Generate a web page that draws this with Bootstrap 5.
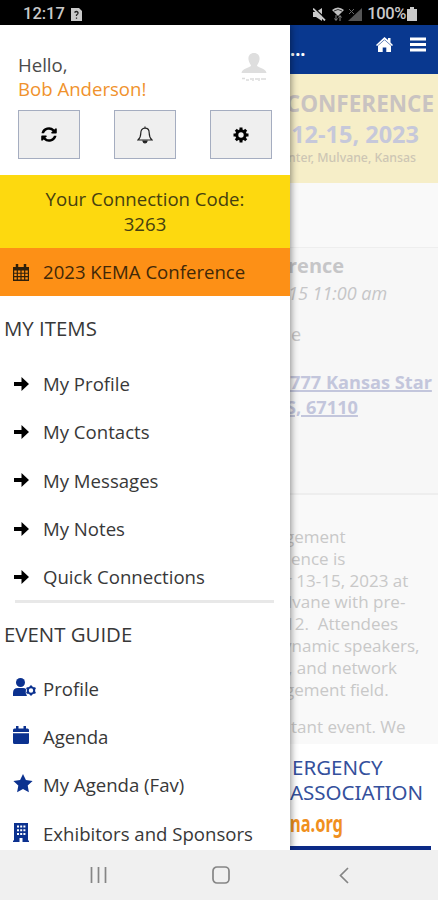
<!DOCTYPE html>
<html lang="en">
<head>
<meta charset="utf-8">
<meta name="viewport" content="width=device-width, initial-scale=1">
<title>2023 KEMA Conference</title>
<link href="https://cdn.jsdelivr.net/npm/bootstrap@5.3.0/dist/css/bootstrap.min.css" rel="stylesheet">
<style>
body{font-family:"Open Sans","Noto Sans",sans-serif;color:#383838;background:#fff}
.phone{width:438px;height:900px}
.status{height:25px;background:#000;color:#c9c9c9;font:500 16.5px/25px Roboto,sans-serif;padding:3px 21px 0 23px}
.status span{line-height:22px}
.sysnav{height:50px;background:#f0f0f0;padding-left:90px}
.drawer{width:290px;z-index:2;box-shadow:1px 0 7px rgba(0,0,0,.45)}
.drawer svg,.event svg,.status svg,.sysnav svg{display:block;flex:none}
.greet{height:150px;padding:28px 18px 0}
.greet p{font-size:18.6px;line-height:24px;color:#4a4a4a}
.greet .who{color:#f0922c}
.avatar{margin:0 5px 0 0}
.tool{width:62px;height:49px;background:#efefef;border:1.5px solid #a5adc0;border-radius:0;color:#000}
.code{height:73px;background:#fdd90f;font-size:18.6px;line-height:24.5px;padding-top:12px;color:#46400f}
.current{height:48px;background:#fd9016;font-size:18.6px;color:#412808;padding-left:13px}
.heading{height:64px;padding-left:4px;font-size:20.4px}
.entry{height:48.2px;font-size:18.6px;padding-left:13px}
.ico{width:30px;flex:none}
.rule{height:3px;background:#e8e8e8;margin:-1px 16px 0 15px}
.guide{height:63px;margin-bottom:-1px}
.blue{color:#0b318f}
.event{min-width:0}
.appbar{height:49px;background:#09388f;color:#fff}
.banner{height:109px;background:#f6eec8;font-weight:700;padding-top:16px}
.line{white-space:nowrap;display:block;flex:none}
.summary{height:248px;background:#f7f7f7;border-top:1px solid #eee;border-bottom:2px solid #eee;color:#c6c6c8}
.gapband{height:64px;background:#f9f9f9}
.about{height:249px;background:#f9f9f9;color:#c8c8c8;font-size:17px;line-height:21.8px;padding-top:31px}
.about .line{margin-left:-5px}
.addr{color:#c3c6dc;font-weight:700;font-size:18.2px;line-height:24.5px;text-decoration:underline;text-decoration-thickness:1.5px}
.logo{color:#34509c;font-family:"Noto Sans",sans-serif;background:#fff}
.orgname{font-size:20.5px;line-height:25px}
.site{font-size:22.5px;line-height:37px;color:#f0901e;transform:scaleX(.73);transform-origin:0 50%}
.logobar{height:4px;background:#0b2a86;margin-right:7px}
</style>
</head>
<body>
<div class="phone d-flex flex-column overflow-hidden">
  <div class="status d-flex align-items-center flex-shrink-0">
    <span>12:17</span>
    <svg style="margin-left:6px" width="11" height="13" viewBox="0 0 11 13"><path fill="#c9c9c9" d="M0 0h8l3 3v10H0z"/><path d="M3.500 4.500q2-2 3.500 0 .5 1.500-1.500 2.500v1M5.500 9.500v1.200" fill="none" stroke="#222" stroke-width="1.300"/></svg>
    <svg class="ms-auto" width="13" height="13" viewBox="0 0 13 13"><path fill="#c9c9c9" d="M0 4h3l6-4v13L3 9H0z"/><path d="M1 0l12 11" stroke="#000" stroke-width="1.300"/><path d="M0 .5l12 12" stroke="#c9c9c9" stroke-width="1.800"/></svg>
    <svg style="margin-left:6px" width="12" height="14" viewBox="0 0 12 14"><path d="M0 3q6-5 12 0L6 9z" fill="#c0c0c0"/><path d="M2 4q4-3 8 0" fill="none" stroke="#333"/><path d="M4 8v5M2.500 11.500L4 13.500l1.500-2M8 14V9M6.500 10.500L8 8.500l1.500 2" stroke="#888" fill="none"/></svg>
    <svg style="margin-left:4px" width="14" height="13" viewBox="0 0 14 13"><path fill="#555" d="M14 0v13H0z"/><path d="M1 1l5 5M6 1L1 6" stroke="#666"/></svg>
    <span style="margin-left:5px;letter-spacing:-.4px">100%</span>
    <svg style="margin-left:1px" width="10" height="14" viewBox="0 0 10 14"><path fill="#c9c9c9" d="M3 0h4v2h3v12H0V2h3z"/></svg>
  </div>

  <div class="d-flex flex-grow-1 overflow-hidden">
    <nav class="drawer bg-white position-relative flex-shrink-0">
      <div class="greet">
        <div class="d-flex justify-content-between">
          <div><p class="m-0">Hello,</p><p class="m-0 who">Bob Anderson!</p></div>
          <svg class="avatar" width="26" height="30" viewBox="0 0 26 30"><path fill="#dedede" d="M13 0c4 0 6 3 5.500 6.500C18 10 16.500 11 16 12.500c0 2 9 2.500 9.500 7.500H.5C1 15 10 14.500 10 12.500 9.500 11 8 10 7.500 6.500 7 3 9 0 13 0z"/><path d="M1 25.500h3M5 27h3M9 26h2M12 25v3M14 26h3M18 25v3M20 26h5" stroke="#dcdcdc" stroke-width="1.500"/></svg>
        </div>
        <div class="d-flex justify-content-between" style="margin-top:9px">
          <button class="tool btn p-0 d-flex align-items-center justify-content-center"><svg width="16" height="15" viewBox="0 0 512 512" preserveAspectRatio="none" fill="currentColor"><path d="M370 143A160 160 0 0 0 101 204c-1 5-6 9-12 9H31c-7 0-13-7-12-14A240 240 0 0 1 427 86l37-37c15-15 41-4 41 17v130c0 13-11 24-24 24H350c-21 0-32-26-17-41zM31 292h130c21 0 32 26 17 41l-37 37a160 160 0 0 0 270-62c1-5 6-9 12-9h58c7 0 13 7 12 14A240 240 0 0 1 85 426l-37 37c-15 15-41 4-41-17V316c0-13 11-24 24-24z"/></svg></button>
          <button class="tool btn p-0 d-flex align-items-center justify-content-center"><svg width="16" height="18" viewBox="0 0 16 18" fill="none" stroke="#222" stroke-width="1.200"><path d="M8 .5v2M8 2.200C5 2.200 3.800 4.500 3.800 7c0 4-1 5.500-2.800 7h14c-1.800-1.500-2.800-3-2.800-7 0-2.500-1.200-4.800-4.200-4.800z"/><path d="M6 15h4q-.5 2-2 2t-2-2z" fill="#222"/></svg></button>
          <button class="tool btn p-0 d-flex align-items-center justify-content-center"><svg width="16" height="16" viewBox="-8 -8 16 16"><circle r="4.200" fill="none" stroke="#000" stroke-width="3"/><path d="M0-7.500v15M-7.500 0h15M-5.200-5.200L5.200 5.200M-5.200 5.200L5.200-5.200" stroke="#000" stroke-width="3"/><circle r="2.700" fill="#efefef"/></svg></button>
        </div>
      </div>
      <div class="code text-center">Your Connection Code:<br>3263</div>
      <div class="current d-flex align-items-center"><span class="ico"><svg width="16" height="17" viewBox="0 0 16 17"><path fill="#30200a" d="M0 3h16v14H0z"/><path d="M4 0v4M12 0v4" stroke="#30200a" stroke-width="2.500"/><path fill="#fd9016" d="M1.200 6.500h2.500v2.200H1.200zM4.900 6.500h2.500v2.200H4.900zM8.600 6.500h2.500v2.200H8.600zM12.300 6.500h2.500v2.200h-2.500zM1.200 9.800h2.500V12H1.200zM4.900 9.800h2.500V12H4.900zM8.600 9.800h2.500V12H8.600zM12.300 9.800h2.500V12h-2.500zM1.200 13.200h2.500v2.400H1.200zM4.900 13.200h2.500v2.400H4.900zM8.600 13.200h2.500v2.400H8.600zM12.300 13.200h2.500v2.400h-2.500z"/></svg></span>2023 KEMA Conference</div>
      <div class="heading d-flex align-items-center">MY ITEMS</div>
      <div class="entry d-flex align-items-center"><span class="ico"><svg width="17" height="14" viewBox="0 0 17 14" fill="#000"><path d="M1 5h7.500V0L16 7l-7.500 7V9H1z"/></svg></span>My Profile</div>
      <div class="entry d-flex align-items-center"><span class="ico"><svg width="17" height="14" viewBox="0 0 17 14" fill="#000"><path d="M1 5h7.500V0L16 7l-7.500 7V9H1z"/></svg></span>My Contacts</div>
      <div class="entry d-flex align-items-center"><span class="ico"><svg width="17" height="14" viewBox="0 0 17 14" fill="#000"><path d="M1 5h7.500V0L16 7l-7.500 7V9H1z"/></svg></span>My Messages</div>
      <div class="entry d-flex align-items-center"><span class="ico"><svg width="17" height="14" viewBox="0 0 17 14" fill="#000"><path d="M1 5h7.500V0L16 7l-7.500 7V9H1z"/></svg></span>My Notes</div>
      <div class="entry d-flex align-items-center"><span class="ico"><svg width="17" height="14" viewBox="0 0 17 14" fill="#000"><path d="M1 5h7.500V0L16 7l-7.500 7V9H1z"/></svg></span>Quick Connections</div>
      <div class="rule"></div>
      <div class="heading guide d-flex align-items-center">EVENT GUIDE</div>
      <div class="entry d-flex align-items-center"><span class="ico blue"><svg width="23" height="22" viewBox="0 0 23 22" fill="currentColor"><circle cx="7.500" cy="4.500" r="4.500"/><path d="M0 18v-3q0-5 5-5h5q2 0 3 1-1 4 1 7z"/><circle cx="18" cy="12.500" r="3.200" fill="none" stroke="currentColor" stroke-width="2"/><path d="M18 7.500v2M18 15.500v2M13.500 10l2 1M20.500 14l2 1M13.500 15l2-1M20.500 11l2-1" stroke="currentColor" stroke-width="2"/></svg></span>Profile</div>
      <div class="entry d-flex align-items-center"><span class="ico blue"><svg width="16" height="22" viewBox="0 0 16 22" fill="currentColor"><path d="M0 6V4q0-1.500 1.500-1.500H3V0h2.500v2.500h5V0H13v2.500h1.500Q16 2.500 16 4v2zM0 7.200h16v9.300q0 1.500-1.500 1.500h-13Q0 18 0 16.500z"/></svg></span>Agenda</div>
      <div class="entry d-flex align-items-center"><span class="ico blue"><svg width="20" height="22" viewBox="0 0 20 22" fill="currentColor"><path d="M10 0l2.900 6.100 6.700.9-4.900 4.600 1.200 6.700L10 15.100l-5.900 3.200 1.200-6.700L.4 7l6.700-.9z"/></svg></span>My Agenda (Fav)</div>
      <div class="entry d-flex align-items-center"><span class="ico blue"><svg width="16" height="22" viewBox="0 0 16 22"><path fill="currentColor" d="M1 0h14v17.500h1V19H9.500v-4h-3v4H0v-1.500h1z"/><path fill="#fff" d="M4 2.500h2v2H4zM7.200 2.500h2v2h-2zM10.400 2.500h2v2h-2zM4 6.200h2v2H4zM7.200 6.200h2v2h-2zM10.400 6.200h2v2h-2zM4 10h2v2H4zM7.200 10h2v2h-2zM10.400 10h2v2h-2z"/></svg></span>Exhibitors and Sponsors</div>
    </nav>

    <main class="event flex-grow-1 d-flex flex-column overflow-hidden">
      <div class="appbar d-flex flex-shrink-0">
        <span style="font:700 18px/49px 'Open Sans',sans-serif">...</span>
        <svg class="ms-auto" style="margin:12px 17px 0 0" width="17" height="15" viewBox="0 0 17 15" fill="#fff"><path d="M8.500 0L12 3V1h2.500v4.500L17 8l-1 1-7.500-6.500L1 9 0 8z"/><path d="M8.500 3L15 8.700V15h-4.700v-4.500H6.700V15H2V8.700z"/></svg>
        <svg style="margin:12px 12px 0 0" width="16" height="15" viewBox="0 0 16 15"><path d="M0 2h16M0 7.500h16M0 13h16" stroke="#fff" stroke-width="3"/></svg>
      </div>
      <div class="banner d-flex flex-column align-items-end flex-shrink-0">
        <span class="line" style="font-size:22.500px;line-height:28px;padding-right:4px;color:#c9c3c1">CONFERENCE</span>
        <span class="line" style="font-size:23.500px;line-height:33px;padding-right:19px;color:#c6c8da">12-15, 2023</span>
        <span class="line" style="font:500 12.300px/14px 'Noto Sans',sans-serif;padding-right:22px;color:#cdc6b4">nter, Mulvane, Kansas</span>
      </div>
      <div class="gapband flex-shrink-0"></div>
      <div class="summary d-flex flex-column flex-shrink-0">
        <span class="line" style="font-size:20px;font-weight:700;line-height:26px;padding-top:5px;margin-left:-2px">rence</span>
        <span class="line fst-italic" style="font-size:18px;line-height:29px;margin-left:-2px">15 11:00 am</span>
        <span class="line" style="font-size:18px;line-height:26px;margin-top:13px;margin-left:1px">e</span>
        <span class="line addr" style="margin-top:23px">777 Kansas Star</span>
        <span class="line addr" style="margin-left:-4px">S, 67110</span>
      </div>
      <div class="about d-flex flex-column flex-shrink-0">
        <span class="line">gement</span>
        <span class="line" style="margin-left:1px">ence is</span>
        <span class="line">r 13-15, 2023 at</span>
        <span class="line" style="margin-left:-2px">lvane with pre-</span>
        <span class="line">12.&nbsp; Attendees</span>
        <span class="line" style="margin-left:-7px">ynamic speakers,</span>
        <span class="line" style="margin-left:-2px">, and network</span>
        <span class="line">gement field.</span>
        <span class="line" style="margin-top:16px;margin-left:1px">tant event. We</span>
      </div>
      <div class="logo flex-grow-1 d-flex flex-column">
        <span class="line orgname" style="padding:11px 0 0 2px">ERGENCY</span>
        <span class="line orgname">ASSOCIATION</span>
        <span class="line fw-bold site">na.org</span>
        <div class="logobar mt-auto"></div>
      </div>
    </main>
  </div>

  <div class="sysnav d-flex align-items-center flex-shrink-0">
    <svg width="17" height="16" viewBox="0 0 17 16"><path d="M1.500 0v16M8.500 0v16M15.500 0v16" stroke="#858585" stroke-width="1.700"/></svg>
    <svg style="margin-left:105px" width="18" height="18" viewBox="0 0 18 18"><rect x="1" y="1" width="16" height="16" rx="4" fill="none" stroke="#858585" stroke-width="1.700"/></svg>
    <svg style="margin-left:109px" width="10" height="17" viewBox="0 0 10 17"><path d="M9 1L1.500 8.500 9 16" fill="none" stroke="#858585" stroke-width="1.700"/></svg>
  </div>
</div>
</body>
</html>
